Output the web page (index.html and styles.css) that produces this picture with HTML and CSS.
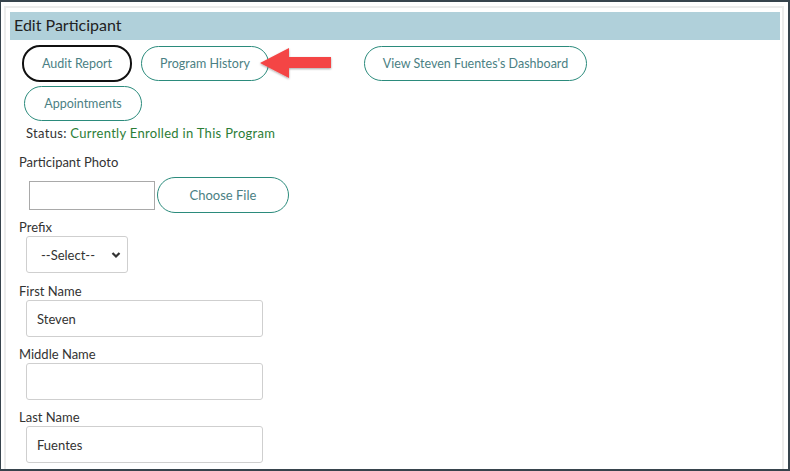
FILE: index.html
```html
<!DOCTYPE html>
<html lang="en">
<head>
    <meta charset="UTF-8">
    <title>Edit Participant</title>
    <link rel="stylesheet" href="styles.css">
</head>
<body>
    <div class="frame">
        <div class="panel">
            <div class="panel-header">Edit Participant</div>
            <div class="actions">
                <button type="button" class="pill pill-focus">Audit Report</button>
                <button type="button" class="pill pill-history">Program History</button>
                <button type="button" class="pill pill-dashboard">View Steven Fuentes's Dashboard</button>
                <button type="button" class="pill pill-appointments">Appointments</button>
                <svg class="pointer" width="90" height="40" viewBox="0 0 90 40">
                    <defs>
                        <filter id="soft" x="-20%" y="-30%" width="140%" height="160%">
                            <feDropShadow dx="0" dy="1" stdDeviation="1.2" flood-color="#000" flood-opacity="0.35"/>
                        </filter>
                    </defs>
                    <polygon points="2,16 31,1 31,10 73,10 73,21 31,21 31,31" fill="#f44545" filter="url(#soft)"/>
                </svg>
            </div>
            <div class="status">Status: <span class="status-value">Currently Enrolled in This Program</span></div>

            <form class="participant-form">
                <label class="field-label">Participant Photo</label>
                <div class="file-row">
                    <span class="file-name"></span>
                    <button type="button" class="pill pill-file">Choose File</button>
                </div>

                <label class="field-label">Prefix</label>
                <div class="select-box">
                    <span>--Select--</span>
                    <svg width="10" height="8" viewBox="0 0 10 8"><path d="M1.5 2 L5 5.5 L8.5 2" fill="none" stroke="#333" stroke-width="2.2"/></svg>
                </div>

                <label class="field-label">First Name</label>
                <input type="text" class="text-input" value="Steven">

                <label class="field-label">Middle Name</label>
                <input type="text" class="text-input" value="">

                <label class="field-label">Last Name</label>
                <input type="text" class="text-input" value="Fuentes">
            </form>
        </div>
    </div>
</body>
</html>
```

FILE: styles.css
```css
* {
    box-sizing: border-box;
}

body {
    margin: 0;
    background-color: #fff;
    font-family: 'Lato', 'Open Sans', sans-serif;
    color: #333;
}

.frame {
    width: 790px;
    height: 471px;
    border: 2px solid #37444d;
    border-left-width: 1px;
    overflow: hidden;
    padding: 4px 4px 0 3px;
}

.panel {
    height: 100%;
    border: 2px solid #ececec;
    border-bottom: none;
    padding: 4px 2px 0 4px;
}

.panel-header {
    background-color: #b0d0da;
    height: 28px;
    padding: 3px 4px 0;
    font-size: 16px;
    color: #222;
}

.actions {
    position: relative;
    display: flex;
    flex-wrap: wrap;
    padding: 5px 0 0 12px;
    width: 600px;
}

.pill {
    height: 35px;
    padding: 0;
    margin: 1px 9px 4px 0;
    border: 1px solid #2b8b7c;
    border-radius: 18px;
    background-color: #fff;
    color: #4b7f84;
    font-family: 'Lato', 'Open Sans', sans-serif;
    font-size: 12.5px;
    white-space: nowrap;
    cursor: pointer;
}

.pill-focus {
    width: 110px;
    height: 37px;
    margin: 0 9px 3px 0;
    border: 2px solid #111;
}

.pill-history {
    width: 128px;
}

.pill-dashboard {
    width: 223px;
    margin-left: 86px;
}

.pill-appointments {
    width: 118px;
    margin-left: 2px;
}

.pointer {
    position: absolute;
    left: 248px;
    top: 7px;
}

.status {
    padding: 0 0 0 16px;
    font-size: 13px;
    letter-spacing: 0.3px;
    color: #333;
}

.status-value {
    color: #2c7d36;
}

.participant-form {
    display: flex;
    flex-direction: column;
    align-items: flex-start;
    padding: 13px 0 0 9px;
}

.field-label {
    font-size: 13px;
    color: #333;
    line-height: 17px;
}

.file-row {
    display: flex;
    align-items: center;
    margin: 6px 0 6px 10px;
}

.file-name {
    width: 126px;
    height: 29px;
    border: 1px solid #a9a9a9;
}

.pill-file {
    width: 132px;
    height: 36px;
    margin: 0 0 0 2px;
    font-size: 13px;
}

.select-box {
    display: flex;
    align-items: center;
    justify-content: space-between;
    width: 102px;
    height: 37px;
    margin: 0 0 10px 7px;
    padding: 0 6px 0 14px;
    border: 1px solid #cfcfcf;
    border-radius: 3px;
    font-size: 13px;
    color: #333;
}

.text-input {
    width: 237px;
    height: 37px;
    margin: 0 0 9px 7px;
    padding: 0 10px;
    border: 1px solid #cfcfcf;
    border-radius: 3px;
    font-family: 'Lato', 'Open Sans', sans-serif;
    font-size: 13px;
    color: #333;
}
```
